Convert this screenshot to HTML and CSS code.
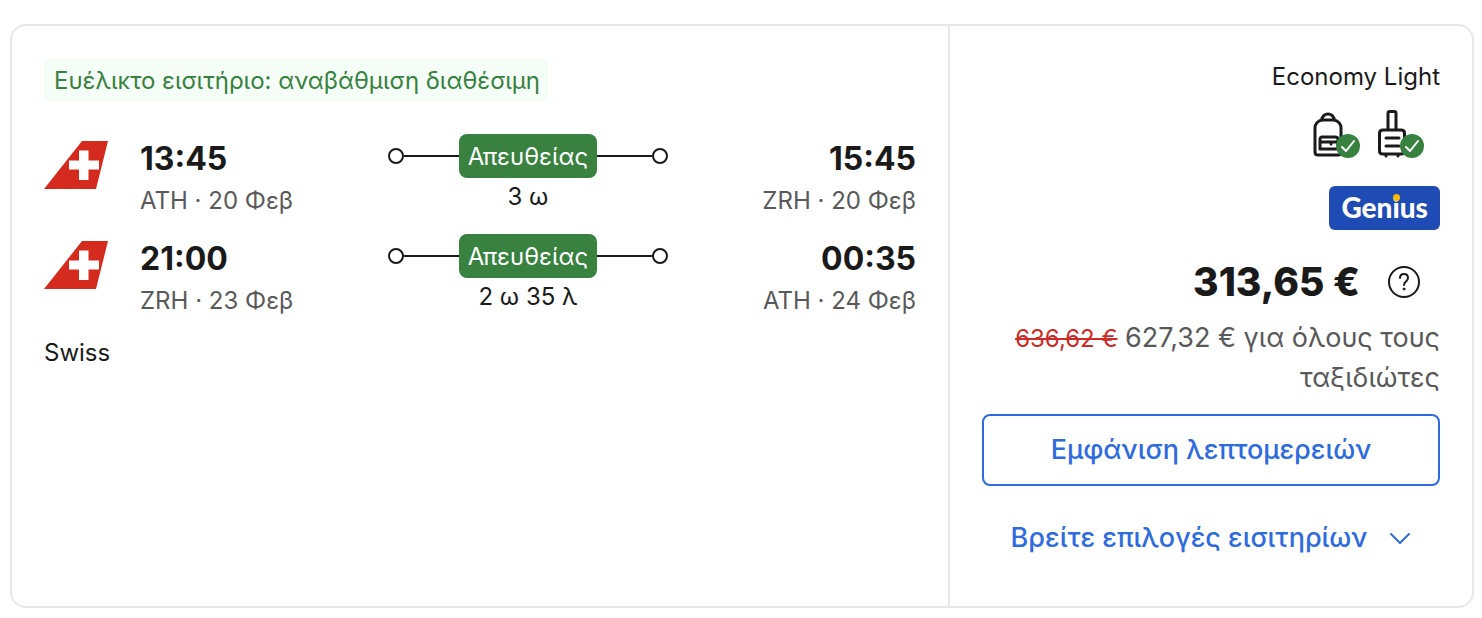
FILE: index.html
```
<!DOCTYPE html>
<html lang="el">
<head>
<meta charset="utf-8">
<meta name="viewport" content="width=device-width, initial-scale=1">
<title>ATH – ZRH</title>
<link rel="stylesheet" href="styles.css">
</head>
<body>
<svg class="symbols" aria-hidden="true">
  <symbol id="swiss" viewBox="0 0 64 64">
    <path fill="#d52b1e" d="M0 55 38 7H64L52 55Z"/>
    <path fill="#fff" d="M35 16.500h9.500v10h10.500v9H44.500v10.500h-9.500v-10.500H25v-9h10Z"/>
  </symbol>
  <symbol id="check" viewBox="0 0 24 24">
    <circle cx="12" cy="12" r="12" fill="#38813f"/>
    <path d="M6 13l4 4 8-10" fill="none" stroke="#fff" stroke-width="2" stroke-linecap="round" stroke-linejoin="round"/>
  </symbol>
</svg>
<main class="card">
  <section class="flights">
    <span class="flex-badge">Ευέλικτο εισιτήριο: αναβάθμιση διαθέσιμη</span>
    <div class="legs">
      <div class="leg">
        <svg class="logo" role="img" aria-label="Swiss"><use href="#swiss"/></svg>
        <div class="route">
          <div class="stop"><span class="time">13:45</span><span class="place">ATH · 20 Φεβ</span></div>
          <div class="path">
            <div class="track"><span class="dot"></span><span class="line"></span><span class="direct">Απευθείας</span><span class="line"></span><span class="dot"></span></div>
            <span class="duration">3 ω</span>
          </div>
          <div class="stop stop-end"><span class="time">15:45</span><span class="place">ZRH · 20 Φεβ</span></div>
        </div>
      </div>
      <div class="leg">
        <svg class="logo" role="img" aria-label="Swiss"><use href="#swiss"/></svg>
        <div class="route">
          <div class="stop"><span class="time">21:00</span><span class="place">ZRH · 23 Φεβ</span></div>
          <div class="path">
            <div class="track"><span class="dot"></span><span class="line"></span><span class="direct">Απευθείας</span><span class="line"></span><span class="dot"></span></div>
            <span class="duration">2 ω 35 λ</span>
          </div>
          <div class="stop stop-end"><span class="time">00:35</span><span class="place">ATH · 24 Φεβ</span></div>
        </div>
      </div>
      <span class="carrier">Swiss</span>
    </div>
  </section>
  <aside class="offer">
    <span class="fare">Economy Light</span>
    <div class="bags">
      <span class="bag">
        <svg viewBox="0 0 48 48" fill="none" stroke="#1a1a1a" stroke-width="3" stroke-linejoin="round" stroke-linecap="round">
          <path d="M17.500 10c1-4 3-6 6.500-6s5.500 2 6.500 6M19 10h10c5 0 8 4 8 8v24c0 2-1 3-3 3H14c-2 0-3-1-3-3V18c0-4 3-8 8-8Z"/>
          <path d="M18 27h13c2 0 3 1 3 2v10H16V29c0-1 1-2 2-2ZM16 32h18M27 32v2"/>
        </svg>
        <svg class="included"><use href="#check"/></svg>
      </span>
      <span class="bag">
        <svg viewBox="0 0 48 48" fill="none" stroke="#1a1a1a" stroke-width="3" stroke-linejoin="round" stroke-linecap="round">
          <path d="M20 19V3c0-1 1-1.500 2-1.500h4c1 0 2 .5 2 1.500v16M15 20h18c2 0 3.500 1 3.500 3v18c0 2-1.500 3-3.500 3H15c-2 0-3.500-1-3.500-3V23c0-2 1.500-3 3.500-3ZM18 28h13M18 36h13M18 44v2M30 44v2"/>
        </svg>
        <svg class="included"><use href="#check"/></svg>
      </span>
    </div>
    <span class="genius">Gen<span class="genius-i">i</span>us</span>
    <div class="price-row">
      <strong class="price">313,65 €</strong>
      <button class="help" type="button" aria-label="Πληροφορίες τιμής">
        <svg viewBox="0 0 32 32" fill="none" stroke="#1a1a1a" stroke-width="2" stroke-linecap="round">
          <circle cx="16" cy="16" r="15"/>
          <path d="M12 12c0-3 2-4 4-4s4 1 4 4-4 4-4 7"/>
          <circle cx="16" cy="23" r="1" fill="#1a1a1a" stroke-width="1"/>
        </svg>
      </button>
    </div>
    <p class="total"><s>636,62 €</s> 627,32 € για όλους τους ταξιδιώτες</p>
    <button class="btn btn-outline" type="button">Εμφάνιση λεπτομερειών</button>
    <button class="btn" type="button">Βρείτε επιλογές εισιτηρίων
      <svg class="chevron" viewBox="0 0 22 22" fill="none" stroke="currentColor" stroke-width="2" stroke-linecap="round" stroke-linejoin="round"><path d="M2 7l9 9 9-9"/></svg>
    </button>
  </aside>
</main>
</body>
</html>
```
FILE: styles.css
```
* { box-sizing: border-box; }

body {
  margin: 0;
  padding: 24px 8px 8px 10px;
  background: #fff;
  color: #1a1a1a;
  font: 24px/36px Inter, "Noto Sans", sans-serif;
}

.symbols { display: none; }

.card {
  display: flex;
  border: 2px solid #e7e7e7;
  border-radius: 16px;
}

.flights {
  flex: 1;
  min-width: 0;
  padding: 32px;
}

.flex-badge {
  display: inline-block;
  padding: 5px 8px 3px 10px;
  border-radius: 8px;
  background: #f4fef7;
  color: #38813f;
  vertical-align: top;
}

.legs {
  display: flex;
  flex-direction: column;
  gap: 16px;
  margin-top: 32px;
}

.leg {
  display: flex;
  gap: 32px;
}

.logo {
  flex: none;
  width: 64px;
  height: 64px;
}

.route {
  flex: 1;
  display: grid;
  grid-template-columns: 1fr 280px 1fr;
}

.stop {
  display: flex;
  flex-direction: column;
}

.stop-end { align-items: flex-end; }

.time {
  font-size: 32px;
  line-height: 50px;
  font-weight: 700;
}

.place {
  color: #595959;
  line-height: 34px;
}

.path {
  display: flex;
  flex-direction: column;
  align-items: center;
}

.track {
  display: flex;
  align-items: center;
  width: 100%;
}

.dot {
  width: 16px;
  height: 16px;
  border: 2px solid #1a1a1a;
  border-radius: 50%;
}

.line {
  flex: 1;
  height: 2px;
  background: #1a1a1a;
}

.direct {
  padding: 5px 9px 3px;
  border-radius: 8px;
  background: #38813f;
  color: #fff;
}

.duration { line-height: 38px; }

.carrier { line-height: 38px; }

.offer {
  display: flex;
  flex-direction: column;
  align-items: flex-end;
  width: 524px;
  padding: 32px;
  border-left: 2px solid #e7e7e7;
}

.fare { line-height: 38px; }

.bags {
  display: flex;
  gap: 16px;
  margin: 14px 24px 28px 0;
}

.bag {
  position: relative;
  width: 48px;
  height: 48px;
}

.bag svg { display: block; }

.included {
  position: absolute;
  right: -8px;
  bottom: 0;
  width: 24px;
  height: 24px;
}

.genius {
  padding: 3px 12px 5px;
  border-radius: 6px;
  background: #1e4bb4;
  color: #fff;
  font: 900 28px/36px Lato, sans-serif;
}

.genius-i { position: relative; }

.genius-i::before {
  content: "";
  position: absolute;
  top: 4px;
  left: 1px;
  width: 7px;
  height: 7px;
  border-radius: 50%;
  background: #febb02;
}

.price-row {
  display: flex;
  align-items: center;
  gap: 28px;
  margin: 26px 20px 10px 0;
}

.price {
  font-size: 39px;
  line-height: 52px;
  font-weight: 800;
}

.help {
  width: 32px;
  height: 32px;
  padding: 0;
  border: 0;
  background: none;
}

.help svg { display: block; }

.total {
  margin: 0 0 16px;
  color: #595959;
  font-size: 27px;
  line-height: 40px;
  text-align: right;
}

.total s {
  color: #cc2927;
  font-size: 24px;
  line-height: 24px;
}

.btn {
  display: flex;
  align-items: center;
  justify-content: center;
  gap: 22px;
  width: 100%;
  padding: 14px;
  border: 2px solid transparent;
  border-radius: 8px;
  background: none;
  color: #2e6bde;
  font: 500 27px/40px Inter, "Noto Sans", sans-serif;
}

.btn-outline {
  margin-bottom: 16px;
  border-color: #2e6bde;
}

.chevron {
  width: 22px;
  height: 22px;
}
```
